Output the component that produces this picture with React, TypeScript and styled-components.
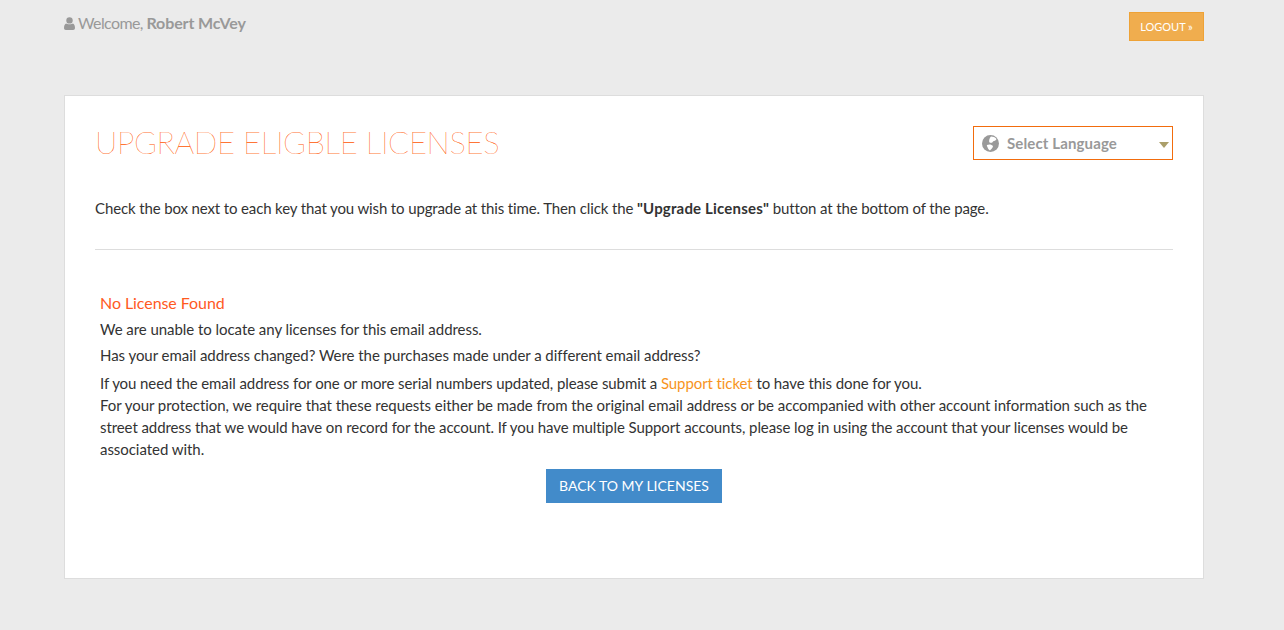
import React from 'react';
import styled, { createGlobalStyle } from 'styled-components';

const Global = createGlobalStyle`
  html, body { margin: 0; padding: 0; background: #ebebeb; }
  body { font-family: Lato, "Liberation Sans", sans-serif; color: #333; }
`;

const Page = styled.div`
  width: 1284px;
  height: 630px;
  overflow: hidden;
  box-sizing: border-box;
  padding: 0 80px 0 64px;
`;

const TopBar = styled.header`
  display: flex;
  justify-content: space-between;
  align-items: flex-start;
  height: 95px;
`;

const Welcome = styled.div`
  display: flex;
  align-items: center;
  gap: 3px;
  margin-top: 13px;
  font-size: 16px;
  line-height: 20px;
  letter-spacing: -0.6px;
  color: #999;
  strong { font-weight: 700; letter-spacing: -0.1px; }
`;

const LogoutButton = styled.button`
  margin-top: 12px;
  width: 75px;
  height: 29px;
  padding: 0;
  border: 1px solid #eea236;
  background: #f0ad4e;
  color: #fff;
  font: 400 11px/1 Lato, sans-serif;
`;

const Card = styled.main`
  box-sizing: border-box;
  width: 1140px;
  height: 484px;
  background: #fff;
  border: 1px solid #ddd;
  padding: 30px;
`;

const HeadRow = styled.div`
  display: flex;
  justify-content: space-between;
  align-items: flex-start;
  height: 34px;
`;

const Title = styled.h1`
  margin: -2px 0 0;
  font-size: 31px;
  line-height: 36px;
  font-weight: 100;
  color: #ff5500;
  -webkit-text-stroke: 0.1px #ff5500;
  white-space: nowrap;
  letter-spacing: -0.37px;
`;

const LangSelect = styled.div`
  box-sizing: border-box;
  width: 200px;
  height: 34px;
  border: 1px solid #f26c0d;
  display: flex;
  align-items: center;
  padding: 0 8px;
  color: #999;
  font-size: 15px;
  font-weight: 700;
  letter-spacing: 0.13px;
  position: relative;
`;

const LangLabel = styled.span`
  margin-left: 8px;
`;

const Caret = styled.span`
  position: absolute;
  right: 3px;
  top: 15px;
  border-left: 5px solid transparent;
  border-right: 5px solid transparent;
  border-top: 6px solid #ab9f6a;
`;

const Intro = styled.p`
  margin: 38px 0 0;
  font-size: 15px;
  line-height: 21px;
  height: 21px;
  letter-spacing: -0.13px;
  strong { letter-spacing: 0.18px; }
`;

const Rule = styled.hr`
  margin: 30px 0 0;
  border: 0;
  border-top: 1px solid #ddd;
`;

const Message = styled.section`
  padding: 42px 5px 0;
  font-size: 15px;
  line-height: 22px;
  letter-spacing: -0.05px;
`;

const Line = styled.p<{ $gap?: number }>`
  margin: ${p => p.$gap ?? 4}px 0 0;
`;

const Tight = styled.span`
  letter-spacing: -0.083px;
`;

const Alert = styled.p`
  margin: 0;
  color: #ff5a1f;
  font-size: 16px;
  letter-spacing: -0.07px;
`;

const OrangeLink = styled.a`
  color: #f7941d;
  text-decoration: none;
`;

const Centered = styled.div`
  display: flex;
  justify-content: center;
  margin-top: 9px;
`;

const BackButton = styled.button`
  box-sizing: border-box;
  width: 176px;
  height: 34px;
  border: 0;
  padding: 0;
  background: #428bca;
  color: #fff;
  font: 400 14px/1 Lato, sans-serif;
`;

const UserIcon = () => (
  <svg width="11" height="13" viewBox="0 0 11 13" fill="#999">
    <circle cx="5.5" cy="3.4" r="3.2" />
    <path d="M2 6.5C3 7.6 8 7.6 9 6.5C10.4 7 11 9 11 11C11 12.3 10.2 13 9.2 13H1.8C0.8 13 0 12.3 0 11C0 9 0.6 7 2 6.5Z" />
  </svg>
);

const GlobeIcon = () => (
  <svg width="17" height="17" viewBox="0 0 17 17">
    <circle cx="8.5" cy="8.5" r="8.5" fill="#999" />
    <path d="M9 1.5C11 1.5 13 2.2 14.5 4C14 6 12 5.5 11 6.5C10.5 8 9 8 7.5 7.5C6.5 6 7.5 3 9 1.5ZM5 10C7 9 10 9.5 11 11C11 13 9 14 8 15.5C6.5 14.5 5.5 13 5.5 12C5 11.5 4.7 10.5 5 10Z" fill="#fff" />
  </svg>
);

export default function App() {
  return (
    <Page>
      <Global />
      <TopBar>
        <Welcome>
          <UserIcon />
          <span>Welcome, <strong>Robert McVey</strong></span>
        </Welcome>
        <LogoutButton>LOGOUT »</LogoutButton>
      </TopBar>
      <Card>
        <HeadRow>
          <Title>UPGRADE ELIGBLE LICENSES</Title>
          <LangSelect>
            <GlobeIcon />
            <LangLabel>Select Language</LangLabel>
            <Caret />
          </LangSelect>
        </HeadRow>
        <Intro>
          Check the box next to each key that you wish to upgrade at this time. Then click the <strong>"Upgrade Licenses"</strong> button at the bottom of the page.
        </Intro>
        <Rule />
        <Message>
          <Alert>No License Found</Alert>
          <Line>We are unable to locate any licenses for this email address.</Line>
          <Line>Has your email address changed? Were the purchases made under a different email address?</Line>
          <Line $gap={6}>
            <Tight>If you need the email address for one or more serial numbers updated, please submit a <OrangeLink href="#">Support ticket</OrangeLink> to have this done for you.</Tight><br />
            For your protection, we require that these requests either be made from the original email address or be accompanied with other account information such as the <Tight>street address that we would have on record for the account. If you have multiple Support accounts, please log in using the account that your licenses would be</Tight> associated with.
          </Line>
          <Centered>
            <BackButton>BACK TO MY LICENSES</BackButton>
          </Centered>
        </Message>
      </Card>
    </Page>
  );
}
